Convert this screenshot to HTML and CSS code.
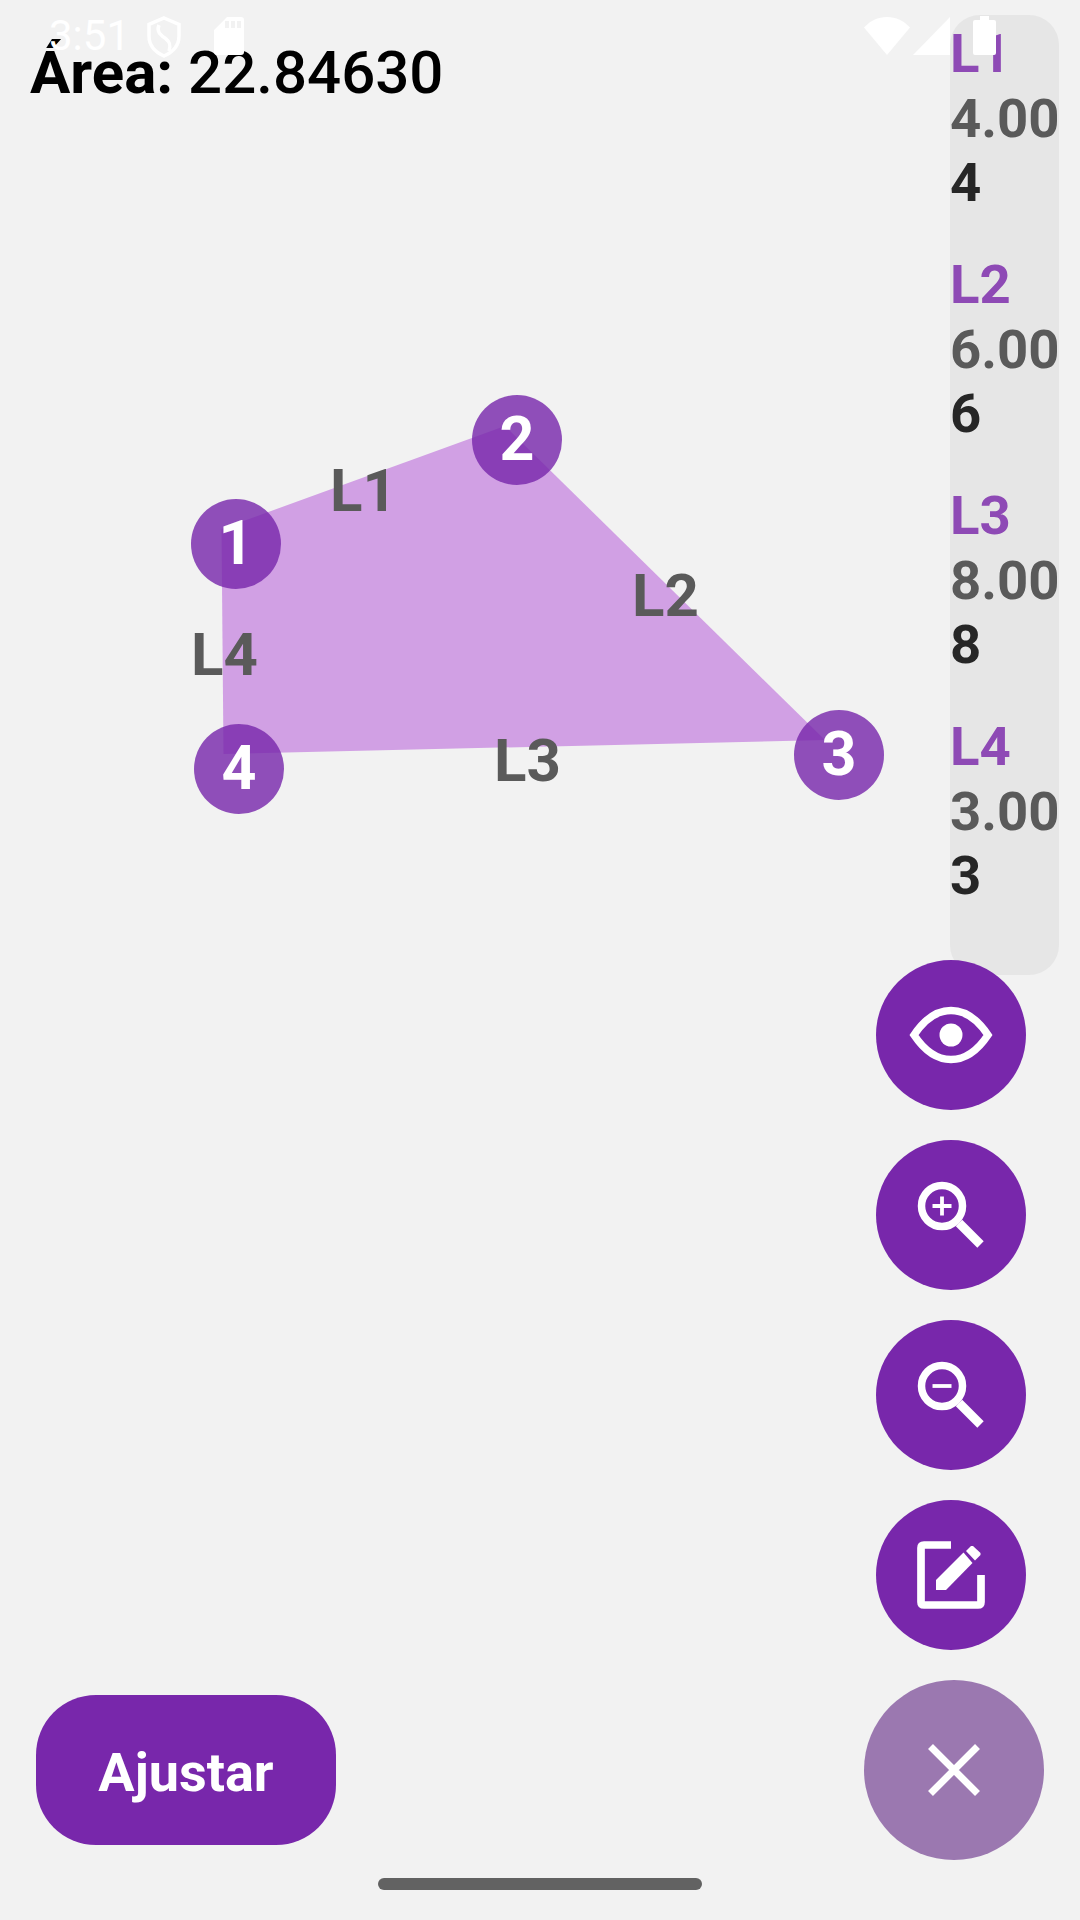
FILE: index.html
```html
<!DOCTYPE html>
<html lang="en">

<head>
    <meta charset="UTF-8">
    <meta name="viewport" content="width=device-width, initial-scale=1.0">
    <title>Área</title>
    <link rel="stylesheet" href="styles.css">
</head>

<body>
    <div class="screen">
        <div class="canvas">
            <svg class="shape" width="1080" height="1920" viewBox="0 0 1080 1920">
                <polygon points="221.500,529 505,426 825,740 223.500,754" fill="#d1a0e4" />
            </svg>
            <span class="side-label label-1">L1</span>
            <span class="side-label label-2">L2</span>
            <span class="side-label label-3">L3</span>
            <span class="side-label label-4">L4</span>
            <div class="node node-1">1</div>
            <div class="node node-2">2</div>
            <div class="node node-3">3</div>
            <div class="node node-4">4</div>
        </div>

        <div class="main">
            <h1 class="area"><b>Área:</b> 22.84630</h1>
            <button class="adjust">Ajustar</button>
        </div>

        <div class="side">
            <div class="panel">
                <div class="row">
                    <div class="row-name">L1</div>
                    <div class="row-value">4.00</div>
                    <div class="row-count">4</div>
                </div>
                <div class="row">
                    <div class="row-name">L2</div>
                    <div class="row-value">6.00</div>
                    <div class="row-count">6</div>
                </div>
                <div class="row">
                    <div class="row-name">L3</div>
                    <div class="row-value">8.00</div>
                    <div class="row-count">8</div>
                </div>
                <div class="row">
                    <div class="row-name">L4</div>
                    <div class="row-value">3.00</div>
                    <div class="row-count">3</div>
                </div>
            </div>

            <div class="fabs">
                <button class="fab">
                    <svg width="150" height="150" viewBox="0 0 150 150">
                        <path d="M38 75C48 60 60 50.500 75 50.500C90 50.500 102 60 112 75C102 90 90 99.500 75 99.500C60 99.500 48 90 38 75Z" fill="none" stroke="#fff" stroke-width="7.500" />
                        <circle cx="75" cy="75" r="11.500" fill="#fff" />
                    </svg>
                </button>
                <button class="fab">
                    <svg width="150" height="150" viewBox="0 0 150 150">
                        <circle cx="66" cy="66" r="20.500" fill="none" stroke="#fff" stroke-width="7.500" />
                        <path d="M56.500 66H75.500M66 56.500V75.500" stroke="#fff" stroke-width="3.800" />
                        <path d="M83 83L104.500 104.500" stroke="#fff" stroke-width="9" />
                    </svg>
                </button>
                <button class="fab">
                    <svg width="150" height="150" viewBox="0 0 150 150">
                        <circle cx="66" cy="66" r="20.500" fill="none" stroke="#fff" stroke-width="7.500" />
                        <path d="M56.500 66H75.500" stroke="#fff" stroke-width="3.800" />
                        <path d="M83 83L104.500 104.500" stroke="#fff" stroke-width="9" />
                    </svg>
                </button>
                <button class="fab">
                    <svg width="150" height="150" viewBox="0 0 150 150">
                        <path d="M75 45H48Q45 45 45 48V102Q45 105 48 105H102Q105 105 105 102V75" fill="none" stroke="#fff" stroke-width="7.700" />
                        <polygon points="60,80 87.500,52.500 96.500,63 70,90 60,90" fill="#fff" />
                        <polygon points="90,51 95,46 97,46 104.500,53 104.500,55 99,60.500" fill="#fff" />
                    </svg>
                </button>
                <button class="fab-close">
                    <svg width="180" height="180" viewBox="0 0 180 180">
                        <path d="M66.500 66.500L113.500 113.500M113.500 66.500L66.500 113.500" stroke="#fff" stroke-width="7" />
                    </svg>
                </button>
            </div>
        </div>

        <div class="status-bar">
            <div class="status-left">
                <span class="clock">3:51</span>
                <svg width="34" height="42" viewBox="0 0 34 42">
                    <path d="M17 2L32 8.500V20C32 29 26 36 17 40C8 36 2 29 2 20V8.500Z" fill="none" stroke="#fff" stroke-width="3.500" />
                    <path d="M12 9C9 16 14 19 19 23C23 26 24 29 22 35" fill="none" stroke="#fff" stroke-width="3.500" />
                </svg>
                <svg class="sd-icon" width="30" height="38" viewBox="0 0 30 38">
                    <path fill-rule="evenodd" d="M13 0H27Q30 0 30 3V35Q30 38 27 38H3Q0 38 0 35V13ZM11 4V11H15V4ZM17 4V11H21V4ZM23 4V11H27V4Z" fill="#fff" />
                </svg>
            </div>
            <div class="status-right">
                <svg width="46" height="38" viewBox="0 0 46 38">
                    <path d="M0 10.500C6 4 14 0 23 0C32 0 40 4 46 10.500L23 38Z" fill="#fff" />
                </svg>
                <svg width="37" height="38" viewBox="0 0 37 38">
                    <polygon points="0,38 37,0 37,38" fill="#fff" />
                </svg>
                <svg class="battery" width="23" height="39" viewBox="0 0 23 39">
                    <path d="M7 0H16V4H21Q23 4 23 6V37Q23 39 21 39H2Q0 39 0 37V6Q0 4 2 4H7Z" fill="#fff" />
                </svg>
            </div>
        </div>

        <div class="home-bar"></div>
    </div>
</body>

</html>
```

FILE: styles.css
```css
* {
    box-sizing: border-box;
}

body {
    margin: 0;
    font-family: Roboto, "Liberation Sans", sans-serif;
    background: #f2f2f2;
}

button {
    border: none;
    padding: 0;
    font-family: inherit;
}

.screen {
    position: relative;
    display: flex;
    width: 1080px;
    height: 1920px;
    overflow: hidden;
    background: #f2f2f2;
}

/* drawing */
.canvas {
    position: absolute;
    top: 0;
    left: 0;
    width: 1080px;
    height: 1920px;
}

.shape {
    display: block;
}

.side-label {
    position: absolute;
    font-size: 60px;
    line-height: 70px;
    font-weight: 700;
    color: #5a5a5a;
}

.label-1 {
    left: 330px;
    top: 456px;
}

.label-2 {
    left: 632px;
    top: 561px;
}

.label-3 {
    left: 494px;
    top: 726px;
}

.label-4 {
    left: 191px;
    top: 620px;
}

.node {
    position: absolute;
    display: flex;
    justify-content: center;
    align-items: center;
    width: 90px;
    height: 90px;
    padding-bottom: 2px;
    border-radius: 50%;
    background: rgba(120, 39, 171, 0.81);
    color: #fff;
    font-size: 61px;
    font-weight: 700;
}

.node-1 {
    left: 191px;
    top: 499px;
}

.node-2 {
    left: 472px;
    top: 395px;
}

.node-3 {
    left: 794px;
    top: 710px;
}

.node-4 {
    left: 194px;
    top: 724px;
}

/* left column */
.main {
    position: relative;
    display: flex;
    flex-direction: column;
    justify-content: space-between;
    align-items: flex-start;
    width: 864px;
    padding: 38px 0 75px 30px;
}

.area {
    margin: 0;
    font-size: 60px;
    line-height: 70px;
    font-weight: 500;
    color: #000;
}

.area b {
    font-weight: 700;
}

.adjust {
    width: 300px;
    height: 150px;
    margin-left: 6px;
    padding-top: 4px;
    border-radius: 60px;
    background: #7827ab;
    color: #fff;
    font-size: 54px;
    font-weight: 700;
}

/* right column */
.side {
    position: relative;
    display: flex;
    flex-direction: column;
    align-items: flex-start;
    width: 216px;
}

.panel {
    display: flex;
    flex-direction: column;
    gap: 37.600px;
    width: 109px;
    height: 960px;
    margin: 15px 0 0 86px;
    padding-top: 6px;
    border-radius: 30px;
    background: #e6e6e6;
    font-size: 54.500px;
    line-height: 64.500px;
    font-weight: 700;
}

.row-name {
    color: #8e4ab5;
}

.row-value {
    color: #5a5a5a;
}

.row-count {
    color: #262626;
}

.fabs {
    display: flex;
    flex-direction: column;
    gap: 30px;
    margin-top: -15px;
    padding-left: 12px;
}

.fab {
    display: block;
    width: 150px;
    height: 150px;
    border-radius: 50%;
    background: #7827ab;
}

.fab svg,
.fab-close svg {
    display: block;
}

.fab-close {
    display: block;
    width: 180px;
    height: 180px;
    margin-left: -12px;
    border-radius: 50%;
    background: #9b78b0;
}

/* system bars */
.status-bar {
    position: absolute;
    top: 0;
    left: 0;
    display: flex;
    justify-content: space-between;
    width: 1080px;
    padding: 16px 84px 0 49px;
}

.status-left,
.status-right {
    display: flex;
    align-items: flex-start;
}

.clock {
    width: 98px;
    margin-top: -5px;
    font-size: 42px;
    line-height: 49px;
    color: #fff;
}

.sd-icon {
    margin: 1px 0 0 33px;
}

.status-right svg {
    margin: 1px 0 0 3px;
}

.status-right .battery {
    margin: 0 0 0 23px;
}

.home-bar {
    position: absolute;
    left: 378px;
    top: 1878px;
    width: 324px;
    height: 12px;
    border-radius: 6px;
    background: #626262;
}
```
